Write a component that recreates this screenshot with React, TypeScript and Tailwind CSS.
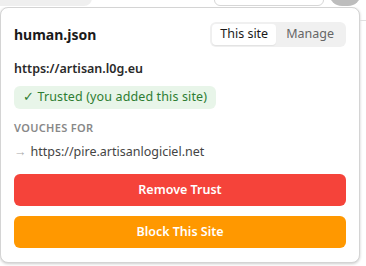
const font = { fontFamily: '"Noto Sans", "Open Sans", sans-serif' }

function TopStrip() {
  // browser toolbar bits peeking out above the popup
  return (
    <div className="relative h-[7px] bg-white">
      <div className="absolute left-0 top-[-10px] h-[16px] w-[92px] rounded-br-[8px] bg-[#efefef]" />
      <div className="absolute left-[214px] top-[-10px] h-[16px] w-[110px] rounded-b-[6px] border border-[#d6d6d6] bg-white" />
      <div className="absolute left-[329px] top-[-20px] h-[26px] w-[32px] rounded-full bg-[#bdbdbd]" />
    </div>
  )
}

export default function App() {
  return (
    <div className="h-[266px] w-[366px] overflow-hidden bg-white" style={font}>
      <TopStrip />
      <div className="flex">
        <div className="w-[360px] shrink-0 rounded-[8px] border border-[#d4d4d4] bg-white px-[13px] pt-[14px] pb-[14px] shadow-[0_1px_3px_rgba(0,0,0,0.2)]">
          {/* Header */}
          <div className="flex items-center justify-between">
            <h1 className="text-[14px] font-bold text-[#1a1a1a]">human.json</h1>
            <div className="flex rounded-[6px] bg-[#f0f0f0] p-[2px]">
              <button className="h-[21px] rounded-[4px] bg-white px-[8px] text-[12.5px] text-[#1a1a1a] shadow-[0_1px_1px_rgba(0,0,0,0.06)]">
                This site
              </button>
              <button className="h-[21px] px-[10px] text-[12.5px] text-[#666]">Manage</button>
            </div>
          </div>

          {/* Current site */}
          <div className="mt-[13px] text-[12.5px] font-semibold text-[#2a2a2a]">https://artisan.l0g.eu</div>
          <div className="mt-[7px] inline-flex h-[23px] items-center rounded-[6px] bg-[#e8f5e9] px-[9px] text-[12.5px] tracking-[0.01em] text-[#2e7d32]">
            ✓ Trusted (you added this site)
          </div>

          {/* Vouches */}
          <div className="mt-[11px] text-[11px] font-semibold tracking-[0.03em] text-[#888]">VOUCHES FOR</div>
          <div className="mt-[7px] flex items-center gap-[4px] text-[12.5px] text-[#444]">
            <span className="text-[#aaa]">→</span>
            <span>https://pire.artisanlogiciel.net</span>
          </div>

          {/* Actions */}
          <div className="mt-[12px] flex flex-col gap-[10px]">
            <button className="h-[32px] w-full rounded-[6px] bg-[#f5433a] text-[12.5px] font-semibold text-white">
              Remove Trust
            </button>
            <button className="h-[32px] w-full rounded-[6px] bg-[#ff9800] text-[12.5px] font-semibold text-white">
              Block This Site
            </button>
          </div>
        </div>
        <div className="mt-[13px] flex-1 border-t border-[#e0e0e0]" />
      </div>
    </div>
  )
}
